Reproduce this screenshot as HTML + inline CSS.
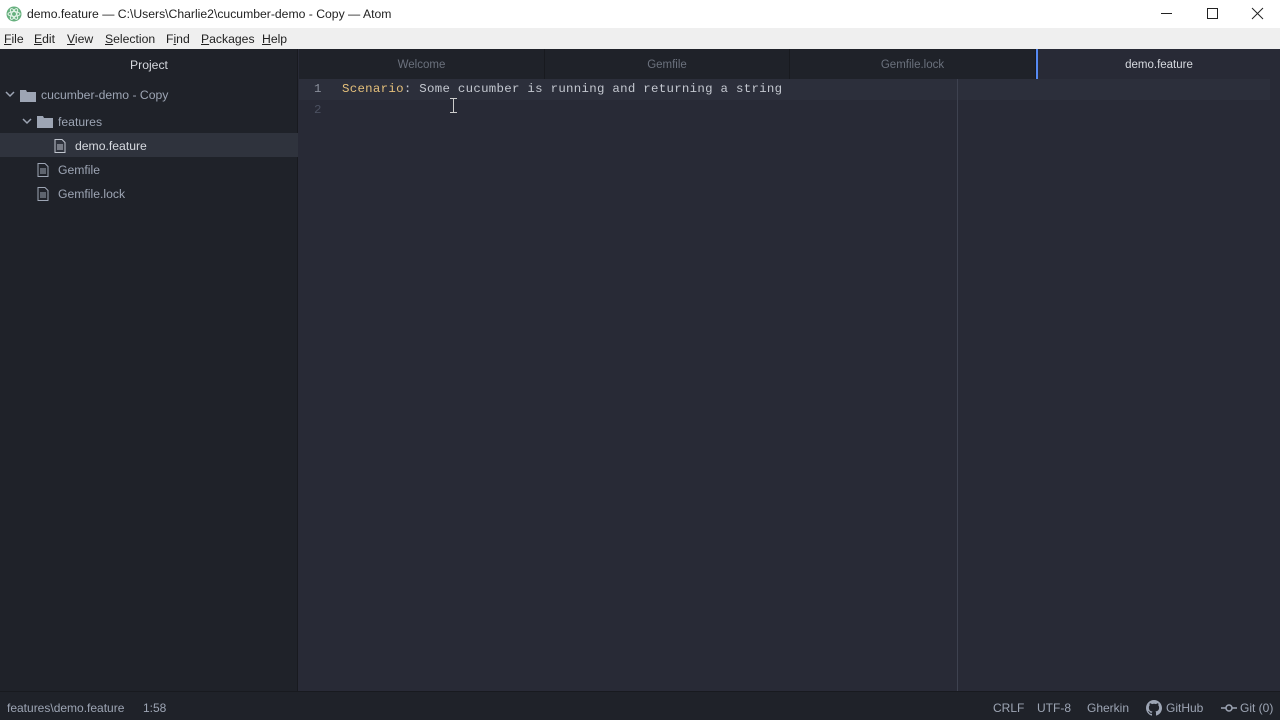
<!DOCTYPE html>
<html><head><style>
*{margin:0;padding:0;box-sizing:border-box}
body{width:1280px;height:720px;overflow:hidden;background:#282a36;font-family:"Liberation Sans",sans-serif;position:relative}
.abs{position:absolute}
#title{left:0;top:0;width:1280px;height:28px;background:#fff;color:#222;font-size:12.2px}
#menu{left:0;top:28px;width:1280px;height:21px;background:#efefef;color:#222;font-size:12.2px}
#menu span{position:absolute;top:4px}
#side{left:0;top:49px;width:298px;height:642px;background:#1f2229;border-right:1px solid #181a1f}
#side .t{position:absolute;font-size:12.2px;color:#9da5b4}
#tabs{left:299px;top:49px;width:981px;height:30px;background:#1f2229}
.tab{position:absolute;top:0;height:30px;font-size:11.5px;color:#6b717d;text-align:center;line-height:33px;border-right:1px solid #181a1f}
#ed{left:299px;top:79px;width:981px;height:612px;background:#282a36}
#status{left:0;top:691px;width:1280px;height:29px;background:#1f2229;border-top:1px solid #181a1f;font-size:12px;color:#9da5b4}
#status span{position:absolute;top:9px}
.code{font-family:"Liberation Mono",monospace;font-size:12.4px;letter-spacing:.29px;position:absolute}
</style></head><body>
<div id="title" class="abs">
<svg class="abs" style="left:6px;top:6px" width="16" height="16"><circle cx="8" cy="8" r="7.5" fill="#66b07e"/><ellipse cx="8" cy="8" rx="6" ry="2.4" fill="none" stroke="#e6f5ea" stroke-width="1"/><ellipse cx="8" cy="8" rx="6" ry="2.4" fill="none" stroke="#e6f5ea" stroke-width="1" transform="rotate(60 8 8)"/><ellipse cx="8" cy="8" rx="6" ry="2.4" fill="none" stroke="#e6f5ea" stroke-width="1" transform="rotate(-60 8 8)"/></svg>
<span class="abs" style="left:27px;top:7px">demo.feature — C:\Users\Charlie2\cucumber-demo - Copy — Atom</span>
<svg class="abs" style="left:1160px;top:7px" width="110" height="14"><line x1="1" y1="6.5" x2="12" y2="6.5" stroke="#222"/><rect x="47.5" y="1.5" width="10" height="10" fill="none" stroke="#222"/><path d="M92 1L103 12M103 1L92 12" stroke="#222"/></svg>
</div>
<div id="menu" class="abs"><span style="left:4px"><u>F</u>ile</span><span style="left:34px"><u>E</u>dit</span><span style="left:67px"><u>V</u>iew</span><span style="left:105px"><u>S</u>election</span><span style="left:166px">F<u>i</u>nd</span><span style="left:201px"><u>P</u>ackages</span><span style="left:262px"><u>H</u>elp</span></div>
<div id="side" class="abs">
<div class="t" style="left:130px;top:9px;color:#d7dae0">Project</div>
<svg class="abs" style="left:5px;top:42px" width="12" height="8"><path d="M1 1L5 5L9 1" fill="none" stroke="#9da5b4" stroke-width="1.5"/></svg>
<svg class="abs" style="left:20px;top:40px" width="16" height="13"><path d="M0 1h6l1 2h9v10H0z" fill="#9da5b4"/></svg>
<div class="t" style="left:41px;top:39px">cucumber-demo - Copy</div>
<svg class="abs" style="left:22px;top:69px" width="12" height="8"><path d="M1 1L5 5L9 1" fill="none" stroke="#9da5b4" stroke-width="1.5"/></svg>
<svg class="abs" style="left:37px;top:66px" width="16" height="13"><path d="M0 1h6l1 2h9v10H0z" fill="#9da5b4"/></svg>
<div class="t" style="left:58px;top:66px">features</div>
<div class="abs" style="left:0;top:84px;width:298px;height:24px;background:#2f333d"></div>
<svg class="abs" style="left:54px;top:90px" width="12" height="14"><path d="M1 .5h7l3 3v10H1z" fill="none" stroke="#c0c5ce"/><path d="M3 6h6M3 8h6M3 10h6" stroke="#c0c5ce"/></svg>
<div class="t" style="left:75px;top:90px;color:#d7dae0">demo.feature</div>
<svg class="abs" style="left:37px;top:114px" width="12" height="14"><path d="M1 .5h7l3 3v10H1z" fill="none" stroke="#9da5b4"/><path d="M3 6h6M3 8h6M3 10h6" stroke="#9da5b4"/></svg>
<div class="t" style="left:58px;top:114px">Gemfile</div>
<svg class="abs" style="left:37px;top:138px" width="12" height="14"><path d="M1 .5h7l3 3v10H1z" fill="none" stroke="#9da5b4"/><path d="M3 6h6M3 8h6M3 10h6" stroke="#9da5b4"/></svg>
<div class="t" style="left:58px;top:138px">Gemfile.lock</div>
</div>
<div id="tabs" class="abs">
<div class="tab" style="left:0;width:246px">Welcome</div>
<div class="tab" style="left:246px;width:245px">Gemfile</div>
<div class="tab" style="left:491px;width:246px">Gemfile.lock</div>
<div class="tab" style="left:737px;width:244px;background:#282a36;color:#d7dae0;border-left:2px solid #568af2;border-right:none">demo.feature</div>
</div>
<div id="ed" class="abs">
<div class="abs" style="left:0;top:0;width:971px;height:21px;background:#2c2f3b"></div>
<div class="abs" style="left:658px;top:0;width:1px;height:612px;background:#3e4250"></div>
<div class="code" style="left:15px;top:3px;color:#8a8f9b">1</div>
<div class="code" style="left:15px;top:24px;color:#4b5060">2</div>
<div class="code" style="left:43px;top:3px;color:#c4c8d0"><span style="color:#e5c07b">Scenario</span>: Some cucumber is running and returning a string</div>
<div class="abs" style="left:154px;top:19px;width:1px;height:15px;background:#ccc"></div>
<div class="abs" style="left:151px;top:19px;width:7px;height:1px;background:#ccc"></div>
<div class="abs" style="left:151px;top:33px;width:7px;height:1px;background:#ccc"></div>
</div>
<div id="status" class="abs">
<span style="left:7px">features\demo.feature</span><span style="left:143px">1:58</span>
<span style="left:993px">CRLF</span><span style="left:1037px">UTF-8</span><span style="left:1087px">Gherkin</span>
<svg class="abs" style="left:1146px;top:8px" width="16" height="16" viewBox="0 0 16 16"><path fill="#9da5b4" d="M8 0C3.6 0 0 3.6 0 8c0 3.5 2.3 6.5 5.5 7.6.4.1.5-.2.5-.4v-1.4c-2.2.5-2.7-1-2.7-1-.4-.9-.9-1.2-.9-1.2-.7-.5.1-.5.1-.5.8.1 1.2.8 1.2.8.7 1.2 1.9.9 2.3.7.1-.5.3-.9.5-1.1-1.8-.2-3.6-.9-3.6-4 0-.9.3-1.6.8-2.1-.1-.2-.4-1 .1-2.1 0 0 .7-.2 2.2.8.6-.2 1.3-.3 2-.3s1.4.1 2 .3c1.5-1 2.2-.8 2.2-.8.4 1.1.2 1.9.1 2.1.5.6.8 1.3.8 2.1 0 3.1-1.9 3.7-3.6 3.9.3.3.5.8.5 1.5v2.2c0 .2.1.5.6.4C13.7 14.5 16 11.5 16 8c0-4.4-3.6-8-8-8z"/></svg>
<span style="left:1166px">GitHub</span>
<svg class="abs" style="left:1221px;top:11px" width="16" height="10"><line x1="0" y1="5" x2="16" y2="5" stroke="#9da5b4" stroke-width="1.5"/><circle cx="8" cy="5" r="3" fill="#1f2229" stroke="#9da5b4" stroke-width="1.5"/></svg>
<span style="left:1240px">Git (0)</span>
</div>
</body></html>
